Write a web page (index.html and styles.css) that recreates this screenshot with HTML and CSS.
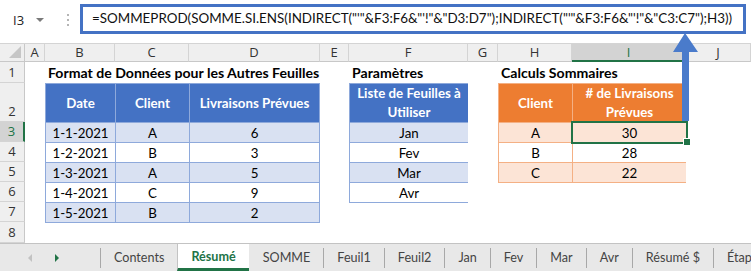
FILE: index.html
```html
<!DOCTYPE html>
<html lang="fr">
<head>
    <meta charset="UTF-8">
    <title>Résumé</title>
    <link rel="stylesheet" href="styles.css">
</head>
<body>
<div class="app">

    <div class="formula-bar">
        <div class="name-box">
            <span class="cell-ref">I3</span>
            <span class="caret"></span>
        </div>
        <div class="grip"><i></i><i></i><i></i></div>
        <div class="formula">=SOMMEPROD(SOMME.SI.ENS(INDIRECT("'"&amp;F3:F6&amp;"'!"&amp;"D3:D7");INDIRECT("'"&amp;F3:F6&amp;"'!"&amp;"C3:C7");H3))</div>
    </div>

    <div class="sheet">
        <div class="corner"><span class="corner-tri"></span></div>
        <div class="col-head">A</div>
        <div class="col-head">B</div>
        <div class="col-head">C</div>
        <div class="col-head">D</div>
        <div class="col-head">E</div>
        <div class="col-head">F</div>
        <div class="col-head">G</div>
        <div class="col-head">H</div>
        <div class="col-head active">I</div>
        <div class="col-head">J</div>

        <div class="row-head r1">1</div>
        <div class="row-head r2">2</div>
        <div class="row-head r3 active">3</div>
        <div class="row-head r4">4</div>
        <div class="row-head r5">5</div>
        <div class="row-head r6">6</div>
        <div class="row-head r7">7</div>
        <div class="row-head r8">8</div>

        <div class="title title-data">Format de Données pour les Autres Feuilles</div>
        <div class="title title-params">Paramètres</div>
        <div class="title title-calc">Calculs Sommaires</div>

        <div class="table blue data-table">
            <div class="th">Date</div>
            <div class="th">Client</div>
            <div class="th">Livraisons Prévues</div>
            <div class="td band">1-1-2021</div><div class="td band">A</div><div class="td band">6</div>
            <div class="td">1-2-2021</div><div class="td">B</div><div class="td">3</div>
            <div class="td band">1-3-2021</div><div class="td band">A</div><div class="td band">5</div>
            <div class="td">1-4-2021</div><div class="td">C</div><div class="td">9</div>
            <div class="td band">1-5-2021</div><div class="td band">B</div><div class="td band">2</div>
        </div>

        <div class="table blue params-table">
            <div class="th">Liste de Feuilles à Utiliser</div>
            <div class="td band">Jan</div>
            <div class="td">Fev</div>
            <div class="td band">Mar</div>
            <div class="td">Avr</div>
        </div>

        <div class="table orange calc-table">
            <div class="th">Client</div>
            <div class="th"># de Livraisons Prévues</div>
            <div class="td band">A</div><div class="td band selected">30</div>
            <div class="td">B</div><div class="td">28</div>
            <div class="td band">C</div><div class="td band">22</div>
        </div>
    </div>

    <div class="tab-bar">
        <div class="tab-nav">
            <span class="nav-prev"></span>
            <span class="nav-next"></span>
        </div>
        <div class="tab">Contents</div>
        <div class="tab current">Résumé</div>
        <div class="tab">SOMME</div>
        <div class="tab">Feuil1</div>
        <div class="tab">Feuil2</div>
        <div class="tab">Jan</div>
        <div class="tab">Fev</div>
        <div class="tab">Mar</div>
        <div class="tab">Avr</div>
        <div class="tab">Résumé $</div>
        <div class="tab">Étapes</div>
    </div>

    <svg class="arrow" width="30" height="92" viewBox="0 0 30 92">
        <path d="M14 0 L27 19 L18 19 L18 88 L11 88 L11 19 L2 19 Z" fill="#4a7bcb"/>
    </svg>
</div>
</body>
</html>
```

FILE: styles.css
```css
* {
    box-sizing: border-box;
}

body {
    margin: 0;
    background: #ffffff;
    font-family: Lato, "Open Sans", sans-serif;
    overflow: hidden;
}

.app {
    position: relative;
    width: 751px;
    height: 271px;
    overflow: hidden;
}

/* formula bar */

.formula-bar {
    height: 44px;
    display: flex;
    align-items: flex-start;
    border-bottom: 1px solid #d4d4d4;
    background: #ffffff;
}

.name-box {
    width: 58px;
    height: 28px;
    margin-top: 6px;
    padding-left: 13px;
    display: flex;
    align-items: center;
    gap: 12px;
    font-family: "Open Sans", sans-serif;
    font-size: 13px;
    color: #222;
    flex-shrink: 0;
}

.caret {
    width: 0;
    height: 0;
    border-left: 4px solid transparent;
    border-right: 4px solid transparent;
    border-top: 4px solid #7a7a7a;
}

.grip {
    width: 20px;
    margin-top: 14px;
    display: flex;
    flex-direction: column;
    align-items: center;
    gap: 3px;
    flex-shrink: 0;
}

.grip i {
    width: 2px;
    height: 2px;
    background: #b5b5b5;
}

.formula {
    width: 666px;
    height: 30px;
    margin-top: 4px;
    margin-left: 2px;
    border: 3px solid #4472c4;
    padding: 0 0 0 9px;
    font-size: 13.4px;
    line-height: 23px;
    color: #111;
    white-space: nowrap;
    overflow: hidden;
}

/* grid */

.sheet {
    display: grid;
    grid-template-columns: 25px 20px 70px 74px 131px 29px 119px 30px 74px 114px 65px;
    grid-template-rows: 18px 21px 39px repeat(5, 20px) 21px;
    height: 199px;
    font-size: 13.3px;
}

.corner,
.col-head,
.row-head {
    background: #efefef;
    font-family: "Open Sans", sans-serif;
    font-size: 13px;
    color: #333;
}

.corner {
    grid-column: 1;
    grid-row: 1;
    position: relative;
    border-right: 1px solid #c8c8c8;
    border-bottom: 1px solid #c8c8c8;
}

.corner-tri {
    position: absolute;
    right: 3px;
    bottom: 3px;
    width: 0;
    height: 0;
    border-left: 12px solid transparent;
    border-bottom: 12px solid #c6c6c6;
}

.col-head {
    grid-row: 1;
    display: flex;
    align-items: center;
    justify-content: center;
    border-right: 1px solid #d4d4d4;
    border-bottom: 1px solid #c8c8c8;
    line-height: 1;
}

.col-head.active {
    background: #d3d3d3;
    border-bottom: 2px solid #217346;
    color: #217346;
}

.row-head {
    grid-column: 1;
    display: flex;
    align-items: flex-end;
    justify-content: center;
    padding-bottom: 3px;
    border-right: 1px solid #c8c8c8;
    border-bottom: 1px solid #d4d4d4;
    line-height: 1;
}

.row-head.active {
    background: #d3d3d3;
    border-right: 2px solid #217346;
    color: #217346;
}

.r1 { grid-row: 2; }
.r2 { grid-row: 3; }
.r3 { grid-row: 4; }
.r4 { grid-row: 5; }
.r5 { grid-row: 6; }
.r6 { grid-row: 7; }
.r7 { grid-row: 8; }
.r8 { grid-row: 9; }

.title {
    grid-row: 2;
    padding: 0 0 2px 3px;
    display: flex;
    align-items: flex-end;
    font-size: 14.1px;
    font-weight: bold;
    white-space: nowrap;
    color: #000;
}

.title-data { grid-column: 3 / 6; }
.title-params { grid-column: 7 / 8; }
.title-calc { grid-column: 9 / 11; }

/* tables: the gap colour draws the cell borders */

.table {
    grid-row: 3 / 9;
    display: grid;
    gap: 1px;
    padding: 1px;
    align-self: start;
}

.blue { background: #8ea9db; }
.orange { background: #f4b084; }

.data-table {
    grid-column: 3 / 6;
    grid-template-columns: 69px 73px 129px;
    grid-template-rows: 38px repeat(5, 19px);
}

.params-table {
    grid-column: 7 / 8;
    grid-template-columns: 118px;
    grid-template-rows: 38px repeat(4, 19px);
}

.calc-table {
    grid-column: 9 / 11;
    grid-template-columns: 73px 113px;
    grid-template-rows: 38px repeat(3, 19px);
}

.th {
    display: flex;
    align-items: center;
    justify-content: center;
    text-align: center;
    font-weight: bold;
    color: #fff;
    line-height: 19px;
    padding: 0 4px;
}

.blue .th { background: #4472c4; }
.orange .th { background: #ed7d31; }

.td {
    display: flex;
    align-items: center;
    justify-content: center;
    background: #fff;
    color: #000;
    line-height: 1;
    padding-top: 2px;
}

.blue .band { background: #d9e1f2; }
.orange .band { background: #fce4d6; }

.td.selected {
    position: relative;
    outline: 2px solid #217346;
}

.td.selected::after {
    content: "";
    position: absolute;
    right: -5px;
    bottom: -4px;
    width: 6px;
    height: 6px;
    background: #217346;
    border: 1px solid #fff;
}

/* sheet tabs */

.tab-bar {
    height: 28px;
    display: flex;
    align-items: stretch;
    background: #e8e8e8;
    border-top: 1px solid #c3c3c3;
    font-family: Lato, sans-serif;
    font-size: 12.6px;
    color: #444;
    white-space: nowrap;
}

.tab-nav {
    width: 100px;
    flex-shrink: 0;
    display: flex;
    align-items: center;
    padding-left: 28px;
    gap: 23px;
}

.nav-prev,
.nav-next {
    width: 0;
    height: 0;
    border-top: 4px solid transparent;
    border-bottom: 4px solid transparent;
}

.nav-prev { border-right: 4px solid #c2c2c2; }
.nav-next { border-left: 4px solid #217346; }

.tab {
    flex-shrink: 0;
    display: flex;
    align-items: center;
    padding: 0 13px 2px;
    border-left: 1px solid #a8a8a8;
    margin: 4px 0 3px;
}

.tab.current {
    margin: 0;
    padding: 0 13px;
    background: #fff;
    border-left: 1px solid #c3c3c3;
    border-bottom: 3px solid #217346;
    font-weight: bold;
    color: #217346;
}

.tab.current + .tab {
    border-left-color: transparent;
}

/* blue arrow drawn over the sheet */

.arrow {
    position: absolute;
    left: 671px;
    top: 33px;
}
```
